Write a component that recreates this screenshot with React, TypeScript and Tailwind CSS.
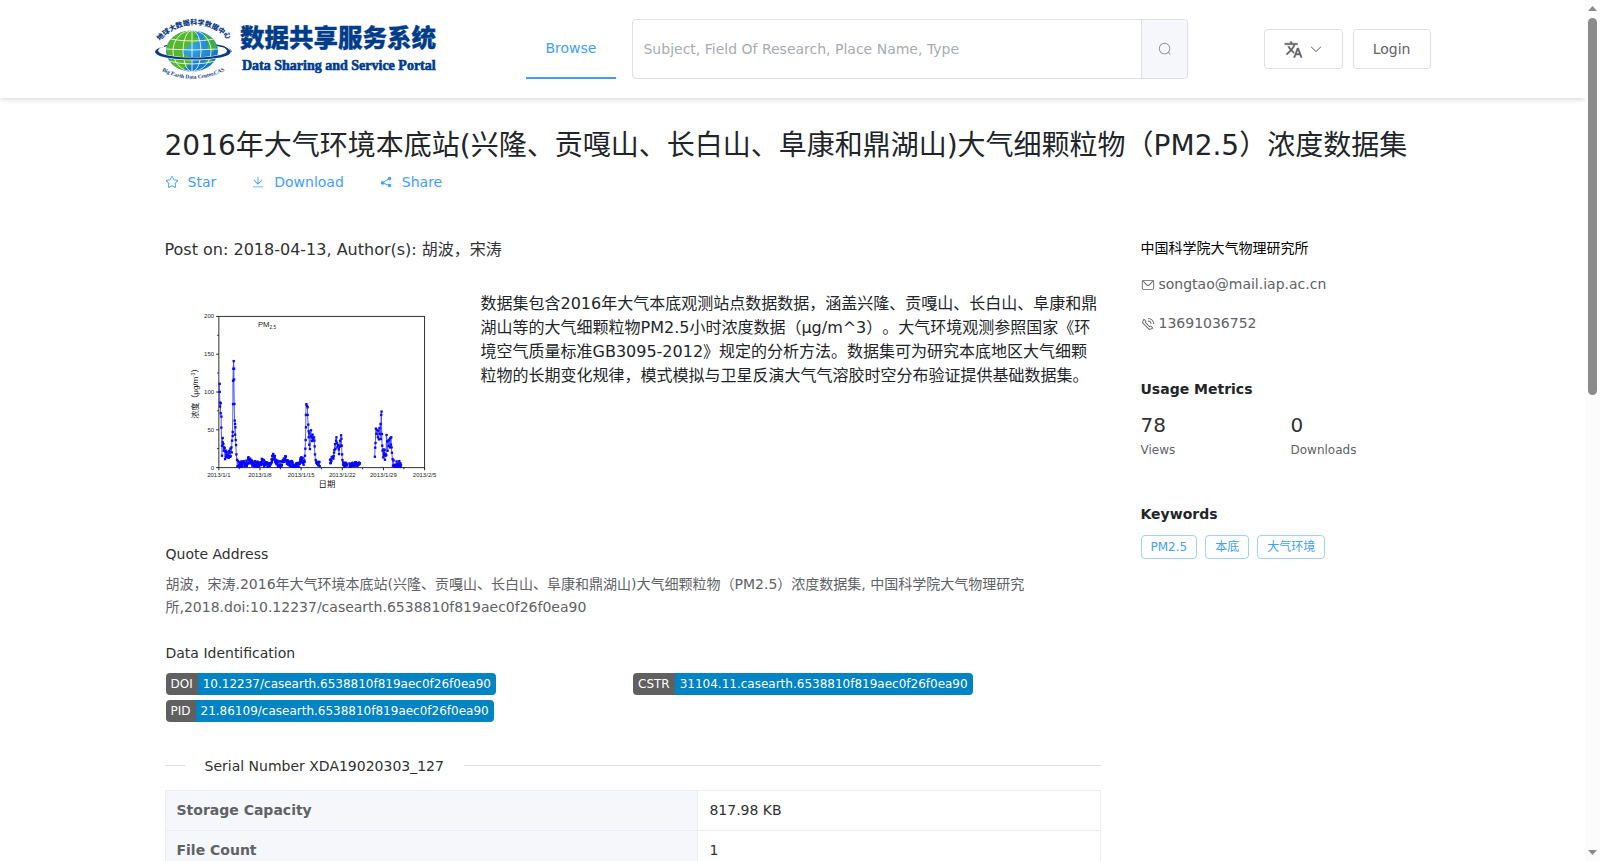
import { ReactNode } from "react";

type Point = [number, number];

const ICONS = {
    search: "m795.904 750.72 124.992 124.928a32 32 0 0 1-45.248 45.248L750.656 795.904a416 416 0 1 1 45.248-45.248zM480 832a352 352 0 1 0 0-704 352 352 0 0 0 0 704z",
    arrowDown: "M831.872 340.864 512 652.672 192.128 340.864a30.592 30.592 0 0 0-42.752 0 29.12 29.12 0 0 0 0 41.6L489.664 714.24a32 32 0 0 0 44.672 0l340.288-331.712a29.12 29.12 0 0 0 0-41.728 30.592 30.592 0 0 0-42.752 0z",
    star: "m512 747.84 228.16 119.936a6.4 6.4 0 0 0 9.28-6.72l-43.52-254.08 184.512-179.904a6.4 6.4 0 0 0-3.52-10.88l-255.104-37.12L517.76 147.904a6.4 6.4 0 0 0-11.52 0L392.192 379.072l-255.104 37.12a6.4 6.4 0 0 0-3.52 10.88L318.08 606.976l-43.584 254.08a6.4 6.4 0 0 0 9.28 6.72L512 747.84zM313.6 924.48a70.4 70.4 0 0 1-102.144-74.24l37.888-220.928L88.96 472.96A70.4 70.4 0 0 1 128 352.896l221.76-32.256 99.2-200.96a70.4 70.4 0 0 1 126.208 0l99.2 200.96 221.824 32.256a70.4 70.4 0 0 1 39.04 120.064L774.72 629.376l37.888 220.928a70.4 70.4 0 0 1-102.144 74.24L512 820.096l-198.4 104.32z",
    download: "M160 832h704a32 32 0 1 1 0 64H160a32 32 0 1 1 0-64zm384-253.696 236.288-236.352 45.248 45.248L508.8 704 192 387.2l45.248-45.248L480 584.704V128h64v450.304z",
    share: "m679.872 348.8-301.76 188.608a127.808 127.808 0 0 1 5.12 52.16l279.936 104.96a128 128 0 1 1-22.464 59.904l-279.872-104.96a128 128 0 1 1-16.64-166.272l301.696-188.608a128 128 0 1 1 33.92 54.272z",
    message: "M128 224v512a64 64 0 0 0 64 64h640a64 64 0 0 0 64-64V224H128zm0-64h768a64 64 0 0 1 64 64v512a128 128 0 0 1-128 128H192A128 128 0 0 1 64 736V224a64 64 0 0 1 64-64z M904 224 656.512 506.88a192 192 0 0 1-289.024 0L120 224h784zm-698.944 0 210.56 240.704a128 128 0 0 0 192.704 0L818.944 224H205.056z",
    phone: "M79.36 432.256 591.744 944.64a32 32 0 0 0 35.2 6.784l253.44-108.544a32 32 0 0 0 9.984-52.032l-153.856-153.92a32 32 0 0 0-36.928-6.016l-69.888 34.944L358.08 394.24l35.008-69.888a32 32 0 0 0-5.952-36.928L233.152 133.568a32 32 0 0 0-52.032 10.048L72.512 397.056a32 32 0 0 0 6.784 35.2zm60.48-29.952 81.536-190.08L325.568 316.48l-24.64 49.216-20.608 41.216 32.576 32.64 271.552 271.552 32.64 32.64 41.216-20.672 49.28-24.576 104.192 104.128-190.08 81.472L139.84 402.304zM512 320v-64a256 256 0 0 1 256 256h-64a192 192 0 0 0-192-192zm0-192V64a448 448 0 0 1 448 448h-64a384 384 0 0 0-384-384z",
};

function Icon({ name }: { name: keyof typeof ICONS }) {
    return (
        <svg className="size-3.5 shrink-0" viewBox="0 0 1024 1024" fill="currentColor" aria-hidden="true">
            <path d={ICONS[name]} />
        </svg>
    );
}

function TranslateIcon() {
    return (
        <svg className="size-[19px]" viewBox="0 0 24 24" fill="currentColor" stroke="currentColor" strokeWidth="0.5" aria-hidden="true">
            <path d="M12.87 15.07l-2.54-2.51.03-.03c1.74-1.94 2.98-4.17 3.71-6.53H17V4h-7V2H8v2H1v1.99h11.17C11.5 7.92 10.44 9.75 9 11.35 8.07 10.32 7.3 9.19 6.69 8h-2c.73 1.63 1.73 3.17 2.98 4.56l-5.09 5.02L4 19l5-5 3.11 3.11.76-2.04zM18.5 10h-2L12 22h2l1.12-3h4.75L21 22h2l-4.5-12zm-2.62 7l1.62-4.33L19.12 17h-3.24z" />
        </svg>
    );
}

function Logo() {
    return (
        <svg className="block" width="284" height="64" viewBox="153 17 284 64" role="img" aria-label="Data Sharing and Service Portal">
            <defs>
                <radialGradient id="sea" cx="0.45" cy="0.4" r="0.7">
                    <stop offset="0" stopColor="#35a9e6" />
                    <stop offset="1" stopColor="#0c6cc0" />
                </radialGradient>
                <clipPath id="globe">
                    <ellipse cx="192" cy="51" rx="26" ry="20.5" />
                </clipPath>
                <path id="arcTop" d="M160 41 A45 45 0 0 1 230 42" />
                <path id="arcBottom" d="M162 71 Q193 87 226 70" />
            </defs>
            <path d="M156 52 C156 45 175 44 193 44 C212 44 231 46 231 52" fill="none" stroke="#0b3a86" strokeWidth="1.5" />
            <ellipse cx="192" cy="51" rx="26" ry="20.5" fill="url(#sea)" />
            <g clipPath="url(#globe)">
                <path d="M166 49 C169 38 178 30 190 30 L197 33 L194 37 L200 38 L196 43 L190 44 L186 49 L180 51 L184 54 L190 57 L192 62 L186 67 L182 71 L174 66 L170 60 Z" fill="#57b72b" />
                <path d="M206 33 L213 38 L217 46 L213 52 L207 49 L208 42 L203 38 Z M207 57 L213 58 L210 64 L205 62 Z" fill="#3fae49" />
                <g fill="none" stroke="#fff" strokeWidth="0.8">
                    <ellipse cx="192" cy="51" rx="9" ry="20.5" />
                    <ellipse cx="192" cy="51" rx="19" ry="20.5" />
                    <path d="M192 30 V72 M170 39 Q192 43 215 39 M165 49 Q192 51 219 49 M168 61 Q192 67 216 61" />
                </g>
            </g>
            <path d="M157 46 C151 50 155 56 169 58 C184 60.500 203 60.500 216 58 C230 56 235 50 225 46 C235 51 227 55 215 56 C201 58.500 184 58.500 171 56 C158 54 154 51 164 46 Z" fill="#fff" stroke="#fff" strokeWidth="1" />
            <path d="M162 47 C151 50 153 56 169 58 C184 60 203 60 216 58 C233 56 235 50 223 47 C230 51 228 54 215 56 C201 58 184 58 171 56 C157 54 155 50 162 47 Z" fill="#0b3a86" />
            <text fontSize="7" fontWeight="900" fill="#0b3a86" style={{ fontFamily: '"Noto Sans CJK SC", sans-serif' }}>
                <textPath href="#arcTop">地球大数据科学数据中心</textPath>
            </text>
            <text fontSize="5.5" fontWeight="700" fill="#0b3a86" style={{ fontFamily: '"Liberation Serif", serif' }}>
                <textPath href="#arcBottom">Big Earth Data Center,CAS</textPath>
            </text>
            <text x="240" y="47" fontSize="24.500" fontWeight="900" fill="#003c8c" stroke="#003c8c" strokeWidth="0.3" style={{ fontFamily: '"Noto Sans CJK SC", sans-serif' }}>
                数据共享服务系统
            </text>
            <text x="242" y="70" fontSize="14" fontWeight="700" fill="#003c8c" stroke="#003c8c" strokeWidth="0.6" style={{ fontFamily: '"Liberation Serif", serif' }}>
                Data Sharing and Service Portal
            </text>
        </svg>
    );
}

// small repeatable generator, so the series is the same on every render
function noise(seed: number) {
    let s = seed;
    return () => {
        s = (s * 16807) % 2147483647;
        return s / 2147483647;
    };
}

function cloud(seed: number, from: number, to: number, base: (x: number) => number, spread: number): Point[] {
    const rnd = noise(seed);
    const points: Point[] = [];
    for (let x = from; x <= to; x += 1) {
        points.push([x, Math.min(528, base(x) + (rnd() - 0.5) * spread)]);
    }
    return points;
}

const bumps = (x: number) => {
    const peaks: Point[] = [[267, 14], [304, 8], [339, 22], [375, 16], [424, 14]];
    return peaks.reduce((y, [px, h]) => y - h * Math.exp(-((x - px) ** 2) / 50), 521);
};

const series: Point[][] = [
    [
        [178, 280], [178, 304], [179, 336], [179, 348], [181, 338], [181, 368], [183, 378], [183, 411], [185, 465], [185, 495], [187, 442], [187, 455], [189, 460], [190, 480], [191, 470],
        ...cloud(7, 193, 211, () => 490, 36),
        [213, 470], [214, 485], [215, 450], [217, 424], [217, 436], [218, 341], [218, 271], [219, 235], [220, 212], [221, 235], [221, 267], [222, 340], [223, 390], [224, 400], [224, 432], [225, 410], [226, 448], [227, 463], [228, 491], [230, 507], [231, 527],
        ...cloud(21, 233, 432, bumps, 20),
        [433, 495], [434, 474], [435, 448], [436, 410], [436, 373], [437, 341], [439, 346], [441, 350], [441, 373], [443, 402], [444, 422], [444, 440], [446, 428], [446, 462], [448, 475], [450, 435], [451, 419], [453, 440], [454, 451], [456, 432], [458, 445], [460, 440], [461, 450], [462, 467], [463, 491], [465, 508], [467, 516],
        ...cloud(3, 468, 477, () => 521, 16),
    ],
    [
        ...cloud(5, 508, 520, (x) => 516 - (x - 508) * 2, 18),
        [521, 478], [523, 460], [524, 475], [526, 450], [527, 440], [529, 457], [530, 470], [532, 463], [534, 476], [535, 490], [537, 468], [538, 450], [540, 465], [541, 434], [542, 444], [543, 465], [544, 491], [545, 508], [547, 522],
        ...cloud(9, 548, 559, () => 522, 14),
    ],
    cloud(15, 566, 597, (x) => 524 - (x - 566) / 5, 12),
    [
        [642, 498], [643, 471], [644, 457], [645, 414], [647, 430], [649, 418], [651, 440], [652, 420], [654, 446], [656, 412], [657, 430], [659, 400], [660, 445], [661, 373], [662, 363], [663, 430], [664, 465], [665, 480], [667, 500],
        ...cloud(11, 668, 676, () => 494, 36),
        [677, 433], [679, 452], [680, 480], [682, 450], [683, 466], [685, 447], [687, 470], [688, 442], [690, 462], [691, 440], [692, 470], [693, 486], [695, 505], [696, 525],
        ...cloud(13, 698, 720, () => 519, 20),
    ],
];

const yTicks = [200, 150, 100, 50, 0];
const xTicks = ["2013/1/1", "2013/1/8", "2013/1/15", "2013/1/22", "2013/1/29", "2013/2/5"];

function Chart() {
    return (
        <svg className="block w-full" viewBox="15 0 873 630" role="img" aria-label="PM2.5" style={{ fontFamily: '"Liberation Sans", "Noto Sans CJK SC", sans-serif' }}>
            <rect x="176" y="79" width="615" height="452" fill="none" stroke="#333" strokeWidth="3" />
            {yTicks.map((tick, i) => (
                <g key={tick}>
                    <path d={`M168 ${79 + i * 113}h8`} stroke="#222" strokeWidth="3" />
                    {i < 4 && <path d={`M171 ${135 + i * 113}h5`} stroke="#222" strokeWidth="3" />}
                    <text x="162" y={85 + i * 113} textAnchor="end" fontSize="18" fill="#222">{tick}</text>
                </g>
            ))}
            {xTicks.map((tick, i) => (
                <g key={tick}>
                    <path d={`M${176 + i * 123} 531v8`} stroke="#222" strokeWidth="3" />
                    {i < 5 && <path d={`M${237 + i * 123} 531v5`} stroke="#222" strokeWidth="3" />}
                    <text x={176 + i * 123} y="560" textAnchor="middle" fontSize="18" fill="#222">{tick}</text>
                </g>
            ))}
            <text x="293" y="111" fontSize="23" fill="#222">
                PM<tspan fontSize="14" dy="7">2.5</tspan>
            </text>
            <text x="499" y="590" textAnchor="middle" fontSize="25" fill="#111">日期</text>
            <text transform="translate(114 385) rotate(-90)" fontSize="24" fill="#111">
                浓度（μg/m<tspan fontSize="14" dy="-8">-3</tspan><tspan dy="8">）</tspan>
            </text>
            {series.map((points, i) => (
                <g key={i}>
                    <polyline points={points.map((p) => p.join(",")).join(" ")} fill="none" stroke="#5a5aff" strokeWidth="3" />
                    {points.map(([x, y], j) => (
                        <rect key={j} x={x - 3} y={y - 3} width="7" height="7" fill="#0808f8" />
                    ))}
                </g>
            ))}
        </svg>
    );
}

function IdBadge({ label, value }: { label: string; value: string }) {
    return (
        <a href="#" className="flex h-[22px] w-fit overflow-hidden rounded text-xs leading-[22px] text-white">
            <span className="bg-[#606060] px-[5px]">{label}</span>
            <span className="bg-[#0283c3] px-[5px]">{value}</span>
        </a>
    );
}

function ActionLink({ icon, children }: { icon: keyof typeof ICONS; children: ReactNode }) {
    return (
        <a href="#" className="flex items-center gap-[9px] text-sm text-[#409eff]">
            <Icon name={icon} />
            {children}
        </a>
    );
}

function Header() {
    return (
        <header className="relative bg-white shadow-[0_1px_6px_rgba(0,0,0,0.18)]">
            <div className="mx-auto flex h-[98px] max-w-[1280px] items-center">
                <a href="#">
                    <Logo />
                </a>
                <nav className="ml-[89px] shrink-0">
                    <a href="#" className="flex h-[60px] items-center border-b-2 border-[#409eff] px-5 text-sm text-[#409eff]">
                        Browse
                    </a>
                </nav>
                <form className="ml-4 flex h-[60px] w-[556px] rounded border border-[#dcdfe6]" onSubmit={(e) => e.preventDefault()}>
                    <input
                        type="text"
                        aria-label="Search"
                        placeholder="Subject, Field Of Research, Place Name, Type"
                        className="min-w-0 flex-1 rounded-l px-2.5 text-sm text-[#606266] outline-none placeholder:text-[#a8abb2]"
                    />
                    <button type="submit" aria-label="Search" className="flex w-[46px] items-center justify-center rounded-r border-l border-[#dcdfe6] bg-[#f5f7fa] text-[#909399]">
                        <Icon name="search" />
                    </button>
                </form>
                <div className="ml-auto mr-0.5 flex gap-2.5 text-sm text-[#606266]">
                    <button type="button" aria-label="Language" className="flex h-10 items-center gap-1.5 rounded border border-[#dcdfe6] px-[19px]">
                        <TranslateIcon />
                        <Icon name="arrowDown" />
                    </button>
                    <button type="button" className="h-10 rounded border border-[#dcdfe6] px-[19px]">Login</button>
                </div>
            </div>
        </header>
    );
}

function Sidebar() {
    return (
        <aside className="w-1/4 pl-7 pr-3 text-sm">
            <p className="leading-[21px] text-black">中国科学院大气物理研究所</p>
            <a href="mailto:songtao@mail.iap.ac.cn" className="mt-[15px] flex items-center gap-1 leading-[21px] text-[#606266]">
                <Icon name="message" />
                songtao@mail.iap.ac.cn
            </a>
            <p className="mt-[18px] flex items-center gap-1 leading-[21px] text-[#606266]">
                <Icon name="phone" />
                13691036752
            </p>

            <h2 className="mt-[45px] font-bold leading-[21px] text-[#212529]">Usage Metrics</h2>
            <dl className="mt-2.5 flex">
                <div className="flex w-[150px] flex-col-reverse">
                    <dt className="text-xs leading-5 text-[#606266]">Views</dt>
                    <dd className="text-xl leading-[30px] text-[#303133]">78</dd>
                </div>
                <div className="flex flex-col-reverse">
                    <dt className="text-xs leading-5 text-[#606266]">Downloads</dt>
                    <dd className="text-xl leading-[30px] text-[#303133]">0</dd>
                </div>
            </dl>

            <h2 className="mt-11 font-bold leading-[21px] text-[#212529]">Keywords</h2>
            <div className="mt-2.5 flex gap-2">
                {["PM2.5", "本底", "大气环境"].map((keyword) => (
                    <span key={keyword} className="flex h-6 items-center rounded border border-[#a0cfff] px-[9px] text-xs text-[#409eff]">
                        {keyword}
                    </span>
                ))}
            </div>
        </aside>
    );
}

const details = [
    { label: "Storage Capacity", value: "817.98 KB" },
    { label: "File Count", value: "1" },
];

function Article() {
    return (
        <article className="w-3/4 px-3">
            <p className="leading-6 text-[#303133]">Post on: 2018-04-13, Author(s): 胡波，宋涛</p>

            <div className="mt-7 flex gap-6">
                <div className="w-[292px] shrink-0">
                    <Chart />
                </div>
                <p className="pt-0.5 leading-6 text-[#212529]">
                    数据集包含2016年大气本底观测站点数据数据，涵盖兴隆、贡嘎山、长白山、阜康和鼎湖山等的大气细颗粒物PM2.5小时浓度数据（μg/m^3）。大气环境观测参照国家《环境空气质量标准GB3095-2012》规定的分析方法。数据集可为研究本底地区大气细颗粒物的长期变化规律，模式模拟与卫星反演大气气溶胶时空分布验证提供基础数据集。
                </p>
            </div>

            <div className="pl-px text-sm leading-[23px]">
                <h2 className="mt-[42px] text-[#303133]">Quote Address</h2>
                <p className="mt-[7px] text-[#606266]">
                    胡波，宋涛.2016年大气环境本底站(兴隆、贡嘎山、长白山、阜康和鼎湖山)大气细颗粒物（PM2.5）浓度数据集, 中国科学院大气物理研究所,2018.doi:10.12237/casearth.6538810f819aec0f26f0ea90
                </p>

                <h2 className="mt-[23px] text-[#303133]">Data Identification</h2>
                <div className="mt-2 grid grid-cols-2 gap-y-[5px]">
                    <IdBadge label="DOI" value="10.12237/casearth.6538810f819aec0f26f0ea90" />
                    <IdBadge label="CSTR" value="31104.11.casearth.6538810f819aec0f26f0ea90" />
                    <IdBadge label="PID" value="21.86109/casearth.6538810f819aec0f26f0ea90" />
                </div>
            </div>

            <div className="mt-8 flex items-center text-sm leading-6 text-[#303133]">
                <span className="h-px w-5 bg-[#dcdfe6]" />
                <span className="px-5">Serial Number XDA19020303_127</span>
                <span className="h-px flex-1 bg-[#dcdfe6]" />
            </div>

            <table className="mt-3 w-full table-fixed border-collapse text-sm leading-[23px]">
                <tbody>
                    {details.map((row) => (
                        <tr key={row.label}>
                            <th scope="row" className="w-[57%] border border-[#ebeef5] bg-[#f5f7fa] px-[11px] py-2 text-left font-bold text-[#606266]">{row.label}</th>
                            <td className="border border-[#ebeef5] px-[11px] py-2 text-[#303133]">{row.value}</td>
                        </tr>
                    ))}
                </tbody>
            </table>
        </article>
    );
}

function Scrollbar() {
    return (
        <div className="flex w-[15px] shrink-0 flex-col items-center bg-[#fcfcfc] py-1.5" aria-hidden="true">
            <svg width="9" height="5" viewBox="0 0 9 5" fill="#8b8b8b">
                <path d="M4.500 0 9 5H0z" />
            </svg>
            <div className="mt-[7px] h-[377px] w-[9px] rounded-full bg-[#8b8b8b]" />
            <svg className="mt-auto" width="9" height="5" viewBox="0 0 9 5" fill="#8b8b8b">
                <path d="M4.500 5 9 0H0z" />
            </svg>
        </div>
    );
}

export default function App() {
    return (
        <div className="flex h-screen bg-white font-['DejaVu_Sans','Noto_Sans_CJK_SC',sans-serif] [text-spacing-trim:space-all]">
            <div className="min-w-0 flex-1 overflow-hidden">
                <Header />
                <main className="mx-auto max-w-[1280px] pt-[31px]">
                    <div className="px-3">
                        <h1 className="text-[28px] leading-[34px] text-[#212529]">
                            2016年大气环境本底站(兴隆、贡嘎山、长白山、阜康和鼎湖山)大气细颗粒物（PM2.5）浓度数据集
                        </h1>
                        <div className="mt-[9px] flex gap-[35px] leading-6">
                            <ActionLink icon="star">Star</ActionLink>
                            <ActionLink icon="download">Download</ActionLink>
                            <ActionLink icon="share">Share</ActionLink>
                        </div>
                    </div>
                    <div className="mt-[46px] flex">
                        <Article />
                        <Sidebar />
                    </div>
                </main>
            </div>
            <Scrollbar />
        </div>
    );
}
